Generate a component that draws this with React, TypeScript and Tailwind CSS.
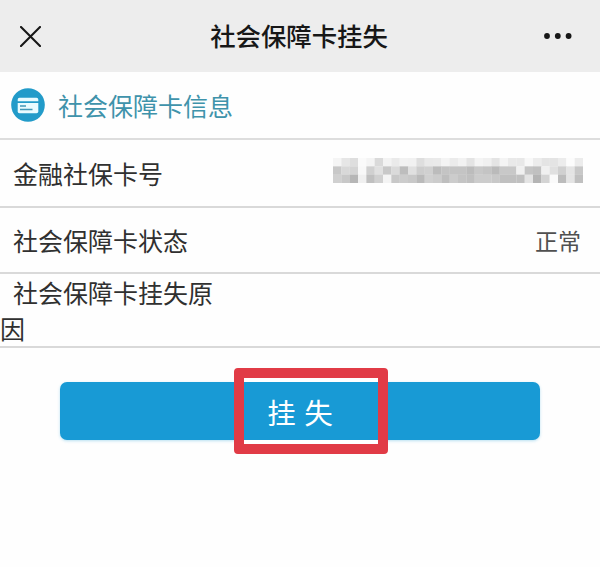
import type { ReactNode } from "react";

// Grey levels of the pixelated card number, one string per row, two hex digits per block.
const MOSAIC = [
  "f5e6defaf4daf3eaf2f1dee9eaf4ebf2e4f4f0e4f4e9e8f8ece4e4ecfcec",
  "c8d8d4f8d0e0c8dabde0cdd0bcc4c4c4bcc8c4bac8c8f0c4c0f0e0d0e4c8",
  "d0c8b6f0c0d0f4c8ccc8bad0ccbeccc4c0ccccc8c0c0c0e4b4d4fabce4c0",
];

function Mosaic() {
  return (
    <svg className="mb-[5px] block h-[25px] w-[250px]" viewBox="0 0 30 3" preserveAspectRatio="none" aria-label="已隐藏">
      {MOSAIC.map((row, y) =>
        (row.match(/../g) ?? []).map((g, x) => (
          <rect key={`${x}-${y}`} x={x} y={y} width="1.02" height="1.02" fill={`#${g}${g}${g}`} />
        )),
      )}
    </svg>
  );
}

function CardIcon() {
  return (
    <svg className="block size-[34px]" viewBox="0 0 34 34">
      <circle cx="17" cy="17" r="16.8" fill="#229bc9" />
      <path d="M8.5 9.8h17a1.8 1.8 0 0 1 1.8 1.8v1.6H6.7v-1.6a1.8 1.8 0 0 1 1.8-1.8Z" fill="#e9fbff" />
      <path d="M6.7 15h20.6v8.4a1.8 1.8 0 0 1-1.8 1.8h-17a1.8 1.8 0 0 1-1.8-1.8Z" fill="#e9fbff" />
      <path d="M9 18h6M9 21.5h12.5" stroke="#4298b8" strokeWidth="1.5" />
    </svg>
  );
}

function Row({ label, children, className }: { label: string; children: ReactNode; className: string }) {
  return (
    <div className={`flex items-center justify-between border-b-2 border-[#d9d9d9] pl-[13px] ${className}`}>
      <span>{label}</span>
      {children}
    </div>
  );
}

export default function App() {
  return (
    <main className="h-[567px] w-[600px] overflow-hidden bg-[#fefefe] font-['Noto_Sans_CJK_SC',sans-serif] text-[25px] leading-9 text-[#303030]">
      <header className="flex h-[72px] items-center justify-between bg-[#ededed] pr-7 pl-5 text-[#171717]">
        <svg className="size-[21px]" viewBox="0 0 21 21" fill="none" stroke="currentColor" strokeWidth="2.1" strokeLinecap="round">
          <path d="m1 1 19 19M20 1 1 20" />
        </svg>
        <h1 className="pb-0.5 pl-[13px] text-[25.4px] font-medium">社会保障卡挂失</h1>
        <svg className="h-[6px] w-[28px]" viewBox="0 0 28 6" fill="currentColor">
          <circle cx="3" cy="3" r="2.9" />
          <circle cx="13.8" cy="3" r="2.9" />
          <circle cx="24.6" cy="3" r="2.9" />
        </svg>
      </header>

      <section className="flex h-[68px] items-center gap-[13px] border-b-2 border-[#dddddd] pl-[11px] text-[#3f93ab]">
        <CardIcon />
        <h2>社会保障卡信息</h2>
      </section>
      <Row label="金融社保卡号" className="h-[68px] pr-[17px]">
        <Mosaic />
      </Row>
      <Row label="社会保障卡状态" className="h-[66px] pr-[19px]">
        <span className="text-[23px] text-[#505050]">正常</span>
      </Row>
      <div className="h-[74px] border-b-2 border-[#d9d9d9]">
        <p className="w-[225px] indent-[13px]">社会保障卡挂失原因</p>
      </div>

      <div className="px-[60px] pt-[34px]">
        <button className="relative flex h-[58px] w-full items-center justify-center rounded-[7px] bg-[#189ad5] text-[28.5px] text-white shadow-[0_1px_3px_rgba(24,154,213,0.3)]">
          <span className="pt-px [word-spacing:2px]">挂 失</span>
          <span className="absolute top-[-14px] left-[174px] h-[86px] w-[154px] rounded-[4px] border-10 border-[#e13b46]">
            <span className="block h-full border-y-4 border-white" />
          </span>
        </button>
      </div>
    </main>
  );
}
